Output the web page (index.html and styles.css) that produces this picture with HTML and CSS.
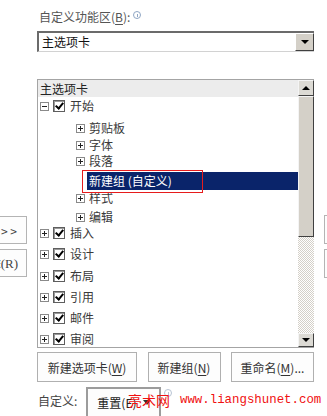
FILE: index.html
```html
<!DOCTYPE html>
<html lang="zh-CN">
<head>
<meta charset="utf-8">
<title>自定义功能区</title>
<link rel="stylesheet" href="styles.css">
</head>
<body>
<div class="page">
  <div class="side-left">
    <button class="side-btn">添加(A) &gt; &gt;</button>
    <button class="side-btn remove">&lt;&lt; 删除<span class="serif">(R)</span></button>
  </div>

  <div class="main">
    <div class="label">自定义功能区(<u>B</u>):<span class="info"></span></div>

    <div class="select">
      <span class="select-text">主选项卡</span>
      <span class="select-btn"><i class="tri-down"></i></span>
    </div>

    <div class="tree">
      <div class="list">
        <div class="row header">主选项卡</div>
        <div class="row top"><span class="exp"></span><span class="chk"></span><span class="txt">开始</span></div>
        <div class="row child"><span class="exp plus"></span><span class="txt">剪贴板</span></div>
        <div class="row child"><span class="exp plus"></span><span class="txt">字体</span></div>
        <div class="row child"><span class="exp plus"></span><span class="txt">段落</span></div>
        <div class="row sel"><span class="sel-text">新建组 (自定义)</span></div>
        <div class="row child"><span class="exp plus"></span><span class="txt">样式</span></div>
        <div class="row child"><span class="exp plus"></span><span class="txt">编辑</span></div>
        <div class="row top"><span class="exp plus"></span><span class="chk"></span><span class="txt">插入</span></div>
        <div class="row top"><span class="exp plus"></span><span class="chk"></span><span class="txt">设计</span></div>
        <div class="row top"><span class="exp plus"></span><span class="chk"></span><span class="txt">布局</span></div>
        <div class="row top"><span class="exp plus"></span><span class="chk"></span><span class="txt">引用</span></div>
        <div class="row top"><span class="exp plus"></span><span class="chk"></span><span class="txt">邮件</span></div>
        <div class="row top"><span class="exp plus"></span><span class="chk"></span><span class="txt">审阅</span></div>
      </div>
      <div class="scroll">
        <div class="sb-btn up"><i class="tri-up"></i></div>
        <div class="thumb"></div>
        <div class="track"></div>
        <div class="sb-btn down"><i class="tri-down"></i></div>
      </div>
      <div class="callout"></div>
    </div>

    <div class="actions">
      <button class="btn w1">新建选项卡(<u>W</u>)</button>
      <button class="btn w2">新建组(<u>N</u>)</button>
      <button class="btn w3">重命名(<u>M</u>)...</button>
    </div>

    <div class="reset-row">
      <span class="reset-label">自定义:</span>
      <button class="reset-btn">重置(E) <i class="tri-down small"></i></button>
      <span class="info gray"></span>
    </div>
  </div>

  <div class="side-right">
    <span class="edge-box"></span>
    <span class="edge-box"></span>
  </div>
</div>

<div class="watermark"><span class="wm-cn">亮术网</span><span class="wm-url">www.liangshunet.com</span></div>
</body>
</html>
```

FILE: styles.css
```css
body {
  margin: 0;
  width: 327px;
  height: 416px;
  overflow: hidden;
  background: #fff;
  font-family: "Noto Sans CJK SC", "Noto Sans", sans-serif;
  font-size: 12px;
  color: #333;
  position: relative;
}

u { text-decoration: underline; text-underline-offset: 2px; }

.page {
  display: flex;
  height: 416px;
}

/* left clipped buttons */
.side-left {
  width: 37px;
  flex: none;
  box-sizing: border-box;
  padding-top: 216px;
  padding-right: 10px;
  display: flex;
  flex-direction: column;
  align-items: flex-end;
  gap: 5px;
}
.side-btn {
  flex: none;
  width: 80px;
  height: 28px;
  border: 1px solid #b4b4b4;
  background: #fdfdfd;
  font-family: inherit;
  font-size: 12px;
  color: #444;
  text-align: right;
  padding: 0 9px 0 0;
}
.side-btn.remove { padding-right: 8px; }
.serif { font-family: "Liberation Serif", serif; font-size: 13px; }

/* main column */
.main {
  width: 277px;
  flex: none;
  display: flex;
  flex-direction: column;
}

.label {
  margin-top: 10px;
  height: 14px;
  line-height: 14px;
  padding-left: 2px;
  color: #555;
  display: flex;
  align-items: center;
}
.info {
  display: inline-block;
  width: 8px;
  height: 8px;
  box-sizing: border-box;
  border: 1px solid #8fa6c4;
  border-radius: 50%;
  margin-left: 3px;
  margin-top: -4px;
  position: relative;
}
.info::after {
  content: "";
  position: absolute;
  left: 2.5px;
  top: 1.5px;
  width: 1px;
  height: 3.5px;
  background: #8fa6c4;
}

.select {
  margin-top: 7px;
  height: 21px;
  box-sizing: border-box;
  border-top: 2px solid #6b6b6b;
  border-left: 2px solid #6b6b6b;
  border-bottom: 1px solid #d2d2d2;
  display: flex;
}
.select-text {
  flex: 1;
  padding-left: 3px;
  line-height: 18px;
  color: #111;
}
.select-btn {
  width: 19px;
  box-sizing: border-box;
  background: #d4d0c8;
  border: 1px solid;
  border-color: #fff #404040 #404040 #fff;
  display: flex;
  align-items: center;
  justify-content: center;
}
.tri-down {
  width: 0;
  height: 0;
  border-left: 4px solid transparent;
  border-right: 4px solid transparent;
  border-top: 4px solid #000;
}
.tri-up {
  width: 0;
  height: 0;
  border-left: 4px solid transparent;
  border-right: 4px solid transparent;
  border-bottom: 4px solid #000;
}

/* tree */
.tree {
  position: relative;
  margin-top: 27px;
  height: 269px;
  box-sizing: border-box;
  border: 1px solid #a4a4a4;
  border-right: 0;
  display: flex;
}
.list {
  flex: 1;
  overflow: hidden;
  display: flex;
  flex-direction: column;
}
.row {
  height: 16px;
  line-height: 16px;
  display: flex;
  align-items: center;
  color: #3a3a3a;
  flex: none;
}
.row.header {
  height: 17px;
  background: #ececec;
  padding-left: 2px;
  color: #222;
}
.row.top { padding-left: 2px; }
.row.child { padding-left: 38px; }
.row.sel { padding-left: 49px; height: 18px; }

.row:nth-child(2) { margin-top: 1px; }
.row:nth-child(3) { margin-top: 6px; }
.row:nth-child(4) { margin-top: 1px; }
.row:nth-child(6) { margin-top: 3px; }
.row:nth-child(8) { margin-top: 3px; }
.row:nth-child(10) { margin-top: 5px; }
.row:nth-child(11) { margin-top: 6px; }
.row:nth-child(12) { margin-top: 5px; }
.row:nth-child(13) { margin-top: 5px; }
.row:nth-child(14) { margin-top: 5px; }

.exp {
  flex: none;
  width: 9px;
  height: 9px;
  box-sizing: border-box;
  border: 1px solid #8a8a8a;
  background: #fff;
  position: relative;
}
.exp::before {
  content: "";
  position: absolute;
  left: 1px;
  top: 3px;
  width: 5px;
  height: 1px;
  background: #222;
}
.exp.plus::after {
  content: "";
  position: absolute;
  left: 3px;
  top: 1px;
  width: 1px;
  height: 5px;
  background: #222;
}
.chk {
  flex: none;
  width: 12px;
  height: 12px;
  box-sizing: border-box;
  border: 1px solid #5e5e5e;
  box-shadow: inset 1px 1px 0 #9a9a9a;
  background: #fff;
  margin-left: 4px;
  position: relative;
}
.chk::after {
  content: "";
  position: absolute;
  left: 3px;
  top: 0px;
  width: 3px;
  height: 6px;
  border-right: 2px solid #000;
  border-bottom: 2px solid #000;
  transform: rotate(40deg);
}
.row.top .txt { margin-left: 5px; }
.row.child .txt { margin-left: 4px; }

.sel-text {
  flex: 1;
  height: 18px;
  line-height: 18px;
  background: #0a246a;
  color: #fff;
  padding-left: 2px;
}

.scroll {
  width: 16px;
  flex: none;
  display: flex;
  flex-direction: column;
}
.sb-btn {
  flex: none;
  height: 16px;
  box-sizing: border-box;
  background: #dcdad4;
  border: 1px solid;
  border-color: #f4f4f4 #404040 #404040 #f4f4f4;
  display: flex;
  align-items: center;
  justify-content: center;
}
.sb-btn.down { height: 14px; }
.thumb {
  flex: none;
  height: 141px;
  box-sizing: border-box;
  background: #d4d0c8;
  border: 1px solid;
  border-color: #f4f4f4 #404040 #404040 #f4f4f4;
}
.track {
  flex: 1;
  background: repeating-conic-gradient(#d4d0c8 0 25%, #fff 0 50%) 0 0 / 2px 2px;
}

.callout {
  position: absolute;
  left: 44px;
  top: 90px;
  width: 121px;
  height: 23px;
  box-sizing: border-box;
  border: 1px solid #e61c1c;
}

/* action buttons */
.actions {
  margin-top: 4px;
  display: flex;
  justify-content: space-between;
}
.btn {
  height: 30px;
  box-sizing: border-box;
  border: 1px solid #b0b0b0;
  background: #fdfdfd;
  font-family: inherit;
  font-size: 12px;
  color: #333;
  padding: 0;
}
.btn.w1 { width: 100px; }
.btn.w2 { width: 73px; }
.btn.w3 { width: 83px; }

.reset-row {
  margin-top: 5px;
  display: flex;
  align-items: flex-start;
}
.reset-label {
  margin-top: 6px;
  margin-left: 1px;
  line-height: 16px;
  color: #444;
}
.reset-btn {
  margin-left: 9px;
  width: 75px;
  height: 34px;
  box-sizing: border-box;
  border: 2px solid #9c9c9c;
  background: #fdfdfd;
  font-family: inherit;
  font-size: 12px;
  color: #222;
  text-align: left;
  padding: 0 0 4px 9px;
  display: flex;
  align-items: center;
  gap: 6px;
}
.tri-down.small {
  border-left-width: 4px;
  border-right-width: 4px;
  border-top-width: 5px;
  border-top-color: #333;
}
.info.gray {
  margin-left: 3px;
  margin-top: 2px;
  border-color: #b8c4d4;
}
.info.gray::after { background: #b8c4d4; }

/* right clipped controls */
.side-right {
  width: 13px;
  flex: none;
  padding-top: 215px;
  display: flex;
  flex-direction: column;
  gap: 5px;
}
.edge-box {
  display: block;
  margin-left: 10px;
  width: 20px;
  height: 29px;
  box-sizing: border-box;
  border: 1px solid #b4b4b4;
  background: #fdfdfd;
}

/* watermark overlay */
.watermark {
  position: absolute;
  left: 128px;
  top: 391px;
  display: flex;
  align-items: center;
  color: #f01010;
  white-space: nowrap;
}
.wm-cn {
  font-size: 14px;
  line-height: 18px;
}
.wm-url {
  margin-left: 10px;
  font-family: "Liberation Mono", monospace;
  font-size: 12.4px;
  line-height: 18px;
}
```
